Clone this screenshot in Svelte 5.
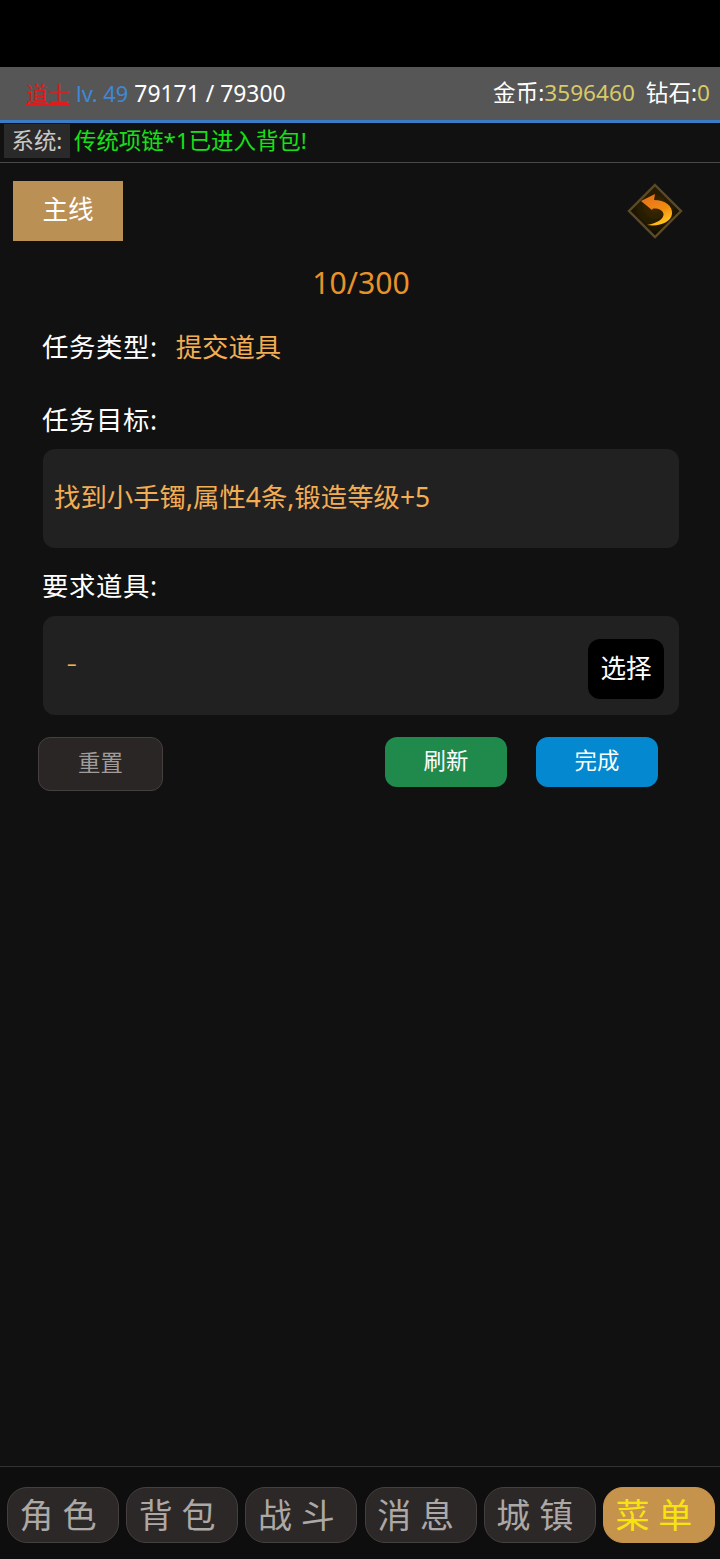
<script>
    // bottom tabs
    const tabs = [
        { label: '角 色' },
        { label: '背 包' },
        { label: '战 斗' },
        { label: '消 息' },
        { label: '城 镇' },
        { label: '菜 单', active: true }
    ];
</script>

<main>
    <div class="status-space"></div>

    <header class="top-bar">
        <div class="player">
            <span class="role">道士</span>
            <span class="level">lv. 49</span>
            <span class="exp">79171 / 79300</span>
        </div>
        <div class="money">
            <span>金币:<em>3596460</em></span>
            <span>钻石:<em>0</em></span>
        </div>
    </header>

    <div class="ticker">
        <span class="ticker-tag">系统:</span>
        <span class="ticker-text">传统项链*1已进入背包!</span>
    </div>

    <section class="quest">
        <div class="quest-head">
            <button class="tab-main">主线</button>
            <svg class="back" viewBox="0 0 56 56" width="56" height="56" aria-label="返回">
                <defs>
                    <linearGradient id="arrow" x1="0.1" y1="0.1" x2="0.5" y2="1">
                        <stop offset="0" stop-color="#e8701a" />
                        <stop offset="0.6" stop-color="#f08c10" />
                        <stop offset="1" stop-color="#ffc01e" />
                    </linearGradient>
                    <radialGradient id="plate" cx="0.5" cy="0.42" r="0.55">
                        <stop offset="0" stop-color="#3e2a06" />
                        <stop offset="0.7" stop-color="#201806" />
                        <stop offset="1" stop-color="#0c0a05" />
                    </radialGradient>
                    <filter id="soft" x="-10%" y="-10%" width="120%" height="120%">
                        <feGaussianBlur stdDeviation="0.5" />
                    </filter>
                </defs>
                <path d="M28 2 L54 28 L28 54 L2 28 Z" fill="url(#plate)" stroke="#5c4a26" stroke-width="2.4" filter="url(#soft)" />
                <path d="M14 18 L28 11 L27 17 C38 17 46 23 45 31 C44 39 33 44 20 42 C30 40 37 36 36.5 31 C36 27 31 25 26 25.5 L25 27 Z" fill="url(#arrow)" filter="url(#soft)" />
            </svg>
        </div>

        <div class="progress">10/300</div>

        <div class="field-row">
            <span class="label">任务类型:</span>
            <span class="value">提交道具</span>
        </div>

        <div class="label goal-label">任务目标:</div>
        <div class="box">
            <span class="value goal-text">找到小手镯,属性4条,锻造等级+5</span>
        </div>

        <div class="label item-label">要求道具:</div>
        <div class="box item-box">
            <span class="value dash">–</span>
            <button class="pick">选择</button>
        </div>

        <div class="actions">
            <button class="btn reset">重置</button>
            <div class="actions-right">
                <button class="btn refresh">刷新</button>
                <button class="btn done">完成</button>
            </div>
        </div>
    </section>

    <nav class="bottom-nav">
        {#each tabs as tab}
            <button class="nav-btn" class:active={tab.active}>{tab.label}</button>
        {/each}
    </nav>
</main>

<style>
    :global(body) {
        margin: 0;
        background: #111111;
    }

    main {
        display: flex;
        flex-direction: column;
        width: 720px;
        height: 1559px;
        background: #111111;
        color: #ffffff;
        font-family: "Noto Sans", "Noto Sans CJK SC", sans-serif;
        overflow: hidden;
    }

    button {
        font-family: inherit;
        border: none;
        padding: 0;
    }

    .status-space {
        height: 67px;
        background: #000000;
    }

    .top-bar {
        display: flex;
        justify-content: space-between;
        align-items: center;
        box-sizing: border-box;
        height: 56px;
        padding: 0 10px 1px 26px;
        background: #565656;
        border-bottom: 3px solid #3a7cc6;
        font-size: 22.6px;
        line-height: 30px;
    }

    .player {
        display: flex;
        align-items: baseline;
        gap: 6px;
    }

    .role {
        font-size: 22px;
        color: #e01b1b;
        text-decoration: underline;
    }

    .level {
        font-size: 21.8px;
        color: #3f88d8;
    }

    .exp {
        font-size: 22.9px;
    }

    .money {
        display: flex;
        gap: 11px;
    }

    .money em {
        font-style: normal;
        color: #d8c968;
    }

    .ticker {
        display: flex;
        align-items: center;
        gap: 4px;
        box-sizing: border-box;
        height: 40px;
        padding: 0 0 3px 4px;
        border-bottom: 1px solid #4a4a4a;
        font-size: 22.4px;
    }

    .ticker-tag {
        display: flex;
        align-items: center;
        justify-content: center;
        box-sizing: border-box;
        width: 66px;
        height: 34px;
        padding-bottom: 4px;
        background: #2a2a2a;
        color: #c8c8c8;
    }

    .ticker-text {
        color: #18e018;
        margin-bottom: 4px;
    }

    .quest {
        display: flex;
        flex-direction: column;
        flex: 1;
        padding: 18px 41px 0 43px;
    }

    .quest-head {
        display: flex;
        justify-content: space-between;
        align-items: center;
        margin-left: -30px;
        margin-right: -4px;
        height: 60px;
    }

    .tab-main {
        width: 110px;
        height: 60px;
        padding-bottom: 6px;
        background: #bb9055;
        color: #ffffff;
        font-size: 25.6px;
    }

    .progress {
        margin-top: 22px;
        text-align: center;
        font-size: 30.2px;
        line-height: 40px;
        color: #e8922a;
    }

    .field-row {
        display: flex;
        gap: 18px;
        margin-top: 24px;
        line-height: 40px;
    }

    .label {
        margin-left: -1px;
        font-size: 26.4px;
        line-height: 40px;
        color: #ffffff;
        letter-spacing: 0.6px;
    }

    .value {
        font-size: 26.4px;
        color: #f3ae54;
    }

    .goal-label {
        margin-top: 33px;
    }

    .item-label {
        margin-top: 18px;
    }

    .box {
        display: flex;
        align-items: center;
        box-sizing: border-box;
        height: 99px;
        margin-top: 9px;
        padding: 0 11px;
        background: #212121;
        border-radius: 12px;
    }

    .goal-text {
        margin-bottom: 6px;
    }

    .item-box {
        justify-content: space-between;
        margin-top: 10px;
        padding: 0 15px 0 24px;
    }

    .dash {
        margin-bottom: 4px;
        font-size: 19px;
    }

    .pick {
        width: 76px;
        height: 60px;
        margin-top: 6px;
        padding-bottom: 4px;
        border-radius: 12px;
        background: #000000;
        color: #ffffff;
        font-size: 25.6px;
    }

    .actions {
        display: flex;
        justify-content: space-between;
        align-items: flex-start;
        margin: 22px 21px 0 -5px;
    }

    .actions-right {
        display: flex;
        gap: 29px;
    }

    .btn {
        font-size: 22.4px;
        color: #ffffff;
        padding-bottom: 6px;
    }

    .reset {
        box-sizing: border-box;
        width: 125px;
        height: 54px;
        padding-bottom: 5px;
        background: #2a2626;
        border: 1px solid #45403f;
        border-radius: 12px;
        color: #a09c9a;
    }

    .refresh,
    .done {
        width: 122px;
        height: 50px;
        border-radius: 12px;
    }

    .refresh {
        background: #208a4c;
    }

    .done {
        background: #0488d0;
    }

    .bottom-nav {
        display: flex;
        justify-content: space-between;
        box-sizing: border-box;
        height: 93px;
        padding: 20px 5px 0 7px;
        background: #0e0e0e;
        border-top: 1px solid #333333;
    }

    .nav-btn {
        box-sizing: border-box;
        width: 112px;
        height: 56px;
        padding-right: 10px;
        background: #2c2828;
        border: 1px solid #45403f;
        border-radius: 20px;
        color: #aca8a6;
        font-size: 34px;
        line-height: 1;
        white-space: nowrap;
    }

    .nav-btn.active {
        background: #c6934c;
        border-color: #c6934c;
        color: #f6e412;
    }
</style>
